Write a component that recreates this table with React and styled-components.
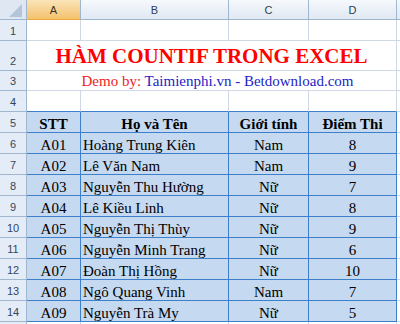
import React from "react";
import styled, { createGlobalStyle, css } from "styled-components";

const GlobalStyle = createGlobalStyle`
  html, body {
    margin: 0;
    padding: 0;
    background: #ffffff;
  }
  body {
    width: 400px;
    height: 324px;
    overflow: hidden;
  }
`;

const students = [
  { id: "A01", name: "Hoàng Trung Kiên", sex: "Nam", score: 8 },
  { id: "A02", name: "Lê Văn Nam", sex: "Nam", score: 9 },
  { id: "A03", name: "Nguyễn Thu Hường", sex: "Nữ", score: 7 },
  { id: "A04", name: "Lê Kiều Linh", sex: "Nữ", score: 8 },
  { id: "A05", name: "Nguyễn Thị Thùy", sex: "Nữ", score: 9 },
  { id: "A06", name: "Nguyễn Minh Trang", sex: "Nữ", score: 6 },
  { id: "A07", name: "Đoàn Thị Hồng", sex: "Nữ", score: 10 },
  { id: "A08", name: "Ngô Quang Vinh", sex: "Nam", score: 7 },
  { id: "A09", name: "Nguyễn Trà My", sex: "Nữ", score: 5 },
];

const columns = ["A", "B", "C", "D", ""];

function App() {
  return (
    <>
      <GlobalStyle />
      <Sheet>
        <Corner>
          <CornerMark />
        </Corner>
        {columns.map((c, i) => (
          <ColHead key={i} $active={c === "A"}>
            {c}
          </ColHead>
        ))}

        <RowHead>1</RowHead>
        <Cell />
        <Cell />
        <Cell />
        <Cell />
        <Cell />

        <RowHead>2</RowHead>
        <Merged>
          <Title>HÀM COUNTIF TRONG EXCEL</Title>
        </Merged>
        <Cell />

        <RowHead>3</RowHead>
        <Merged $shift>
          <Demo>
            <Red>Demo by: </Red>
            <Blue>Taimienphi.vn - Betdownload.com</Blue>
          </Demo>
        </Merged>
        <Cell />

        <RowHead>4</RowHead>
        <Cell $edge />
        <Cell $edge />
        <Cell $edge />
        <Cell $edge />
        <Cell />

        <RowHead>5</RowHead>
        <Cell $table $bold $align="center">STT</Cell>
        <Cell $table $bold $align="center">Họ và Tên</Cell>
        <Cell $table $bold $align="center">Giới tính</Cell>
        <Cell $table $bold $align="center">Điểm Thi</Cell>
        <Cell />

        {students.map((s, i) => (
          <React.Fragment key={s.id}>
            <RowHead>{i + 6}</RowHead>
            <Cell $table $align="center">{s.id}</Cell>
            <Cell $table>{s.name}</Cell>
            <Cell $table $align="center">{s.sex}</Cell>
            <Cell $table $align="center">{s.score}</Cell>
            <Cell />
          </React.Fragment>
        ))}

        <RowHead />
        <Cell />
        <Cell />
        <Cell />
        <Cell />
        <Cell />
      </Sheet>
    </>
  );
}

export default App;

const Sheet = styled.div`
  display: grid;
  grid-template-columns: 27px 54px 148px 80px 88px 1fr;
  grid-template-rows: 20px 21px 30px 20px 21px repeat(10, 21px) 1fr;
  width: 400px;
  height: 324px;
  overflow: hidden;
  background: #ffffff;
`;

const Corner = styled.div`
  display: flex;
  align-items: flex-end;
  justify-content: flex-end;
  padding: 0 4px 2px 0;
  box-sizing: border-box;
  background: #dfe7f2;
  border-right: 1px solid #9eb6ce;
  border-bottom: 1px solid #9eb6ce;
`;

const CornerMark = styled.span`
  width: 13px;
  height: 13px;
  background: #b4c4d9;
  clip-path: polygon(100% 0, 100% 100%, 0 100%);
`;

const ColHead = styled.div`
  display: flex;
  align-items: center;
  justify-content: center;
  box-sizing: border-box;
  border-right: 1px solid #9eb6ce;
  border-bottom: 1px solid #9eb6ce;
  font-family: "Liberation Sans", Arial, sans-serif;
  font-size: 11px;
  line-height: 13px;
  padding-top: 1px;
  color: #2c3e55;
  background: linear-gradient(#f6f9fc, #e0e8f3);
  ${(p) =>
    p.$active &&
    css`
      background: linear-gradient(#fbe4b8, #f4c26e);
      border-bottom-color: #f2a93b;
      color: #3d3322;
    `}
`;

const RowHead = styled.div`
  display: flex;
  align-items: flex-end;
  justify-content: center;
  box-sizing: border-box;
  padding-bottom: 2px;
  border-right: 1px solid #9eb6ce;
  border-bottom: 1px solid #9eb6ce;
  background: #e4ecf7;
  font-family: "Liberation Sans", Arial, sans-serif;
  font-size: 11px;
  line-height: 13px;
  color: #34465c;
`;

const Cell = styled.div`
  display: flex;
  align-items: flex-end;
  justify-content: ${(p) => (p.$align === "center" ? "center" : "flex-start")};
  box-sizing: border-box;
  padding: 0 2px;
  overflow: hidden;
  white-space: nowrap;
  border-right: 1px solid #d0d7e5;
  border-bottom: 1px solid ${(p) => (p.$edge ? "#3d7fca" : "#d0d7e5")};
  font-family: "Liberation Serif", "Times New Roman", serif;
  font-size: 15px;
  line-height: 16px;
  font-weight: ${(p) => (p.$bold ? 700 : 400)};
  color: #000000;
  ${(p) =>
    p.$table &&
    css`
      background: #c5d9f1;
      border-right-color: #3d7fca;
      border-bottom-color: #3d7fca;
    `}
`;

const Merged = styled.div`
  grid-column: 2 / 6;
  display: flex;
  align-items: flex-end;
  justify-content: center;
  box-sizing: border-box;
  padding-left: ${(p) => (p.$shift ? "12px" : "0")};
  border-right: 1px solid #d0d7e5;
  border-bottom: 1px solid #d0d7e5;
  white-space: nowrap;
`;

const Title = styled.div`
  font-family: "Liberation Serif", "Times New Roman", serif;
  font-size: 21px;
  line-height: 23px;
  font-weight: 700;
  color: #ff0000;
  padding-bottom: 2px;
`;

const Demo = styled.div`
  font-family: "Liberation Serif", "Times New Roman", serif;
  font-size: 15px;
  line-height: 16px;
  padding-bottom: 1px;
`;

const Red = styled.span`
  color: #ee1c25;
  white-space: pre;
`;

const Blue = styled.span`
  color: #2323c4;
`;
